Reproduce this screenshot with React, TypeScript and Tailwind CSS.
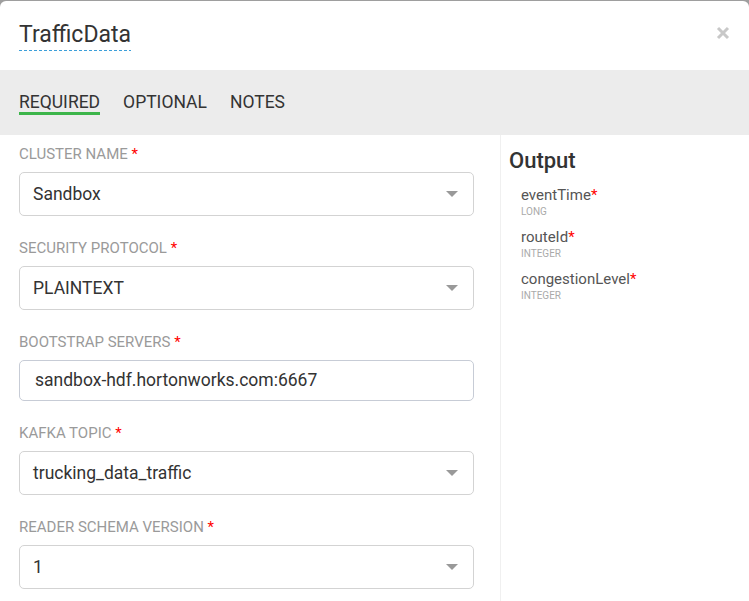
import { ReactNode } from 'react';

interface FieldProps {
  label: string;
  value: string;
  select?: boolean;
}

function Field({ label, value, select = true }: FieldProps) {
  return (
    <div className="mb-[22px]">
      <label className="block text-[15px] leading-5 text-[#9a9a9a] uppercase mb-[8px]">
        {label} <span className="text-[#ff0000]">*</span>
      </label>
      {select ? (
        <div className="flex items-center justify-between h-[44px] border border-[#d3d3d3] rounded-[5px] pl-[13px] pr-[13px] bg-white">
          <span className="text-[17.5px] text-[#333]">{value}</span>
          <svg width="14" height="8" viewBox="0 0 14 8" className="mr-[1px]">
            <path d="M1 1 L13 1 L7 7 Z" fill="#999" />
          </svg>
        </div>
      ) : (
        <div className="flex items-center h-[41px] border border-[#c7ccd6] rounded-[5px] pl-[15px] bg-white">
          <span className="text-[17.5px] text-[#333]">{value}</span>
        </div>
      )}
    </div>
  );
}

function OutputField({ name, type }: { name: string; type: string }) {
  return (
    <div className="mb-[9px]">
      <div className="text-[15px] leading-5 text-[#555]">
        {name}
        <span className="text-[#ff0000]">*</span>
      </div>
      <div className="text-[10px] leading-3 text-[#aaa] uppercase mt-[1px]">{type}</div>
    </div>
  );
}

function Tab({ children, active }: { children: ReactNode; active?: boolean }) {
  return (
    <div className="relative h-full flex items-center">
      <span className="text-[17.5px] text-[#333]">{children}</span>
      {active && <div className="absolute left-0 right-0 top-[42px] h-[3px] bg-[#3cb54a]" />}
    </div>
  );
}

export default function App() {
  return (
    <div
      className="w-[749px] h-[601px] bg-[#9e9e9e] pt-[1px] overflow-hidden"
      style={{ fontFamily: 'Roboto, "Liberation Sans", sans-serif' }}
    >
      <div className="bg-white rounded-t-[6px] h-full flex flex-col">
        {/* Header */}
        <div className="h-[69px] shrink-0 flex items-start justify-between px-[19px]">
          <div className="pt-[20px] inline-flex flex-col">
            <span className="text-[23px] leading-[28px] text-[#333]">TrafficData</span>
            <div className="h-[1px] mt-[1px] bg-[repeating-linear-gradient(90deg,#3c9fd9_0_3px,transparent_3px_5px)]" />
          </div>
          <div className="pt-[25px]">
            <svg width="14" height="14" viewBox="0 0 14 14">
              <path d="M2 2 L12 12 M12 2 L2 12" stroke="#c8c8c8" strokeWidth="3" />
            </svg>
          </div>
        </div>

        {/* Tabs */}
        <div className="h-[65px] shrink-0 bg-[#ececec] flex pl-[19px] gap-[23px]">
          <Tab active>REQUIRED</Tab>
          <Tab>OPTIONAL</Tab>
          <Tab>NOTES</Tab>
        </div>

        {/* Body */}
        <div className="flex flex-1 min-h-0">
          <div className="w-[501px] shrink-0 pl-[19px] pr-[26px] pt-[9px] border-r border-[#f0f0f0]">
            <Field label="Cluster Name" value="Sandbox" />
            <Field label="Security Protocol" value="PLAINTEXT" />
            <Field label="Bootstrap Servers" value="sandbox-hdf.hortonworks.com:6667" select={false} />
            <Field label="Kafka Topic" value="trucking_data_traffic" />
            <Field label="Reader Schema Version" value="1" />
          </div>
          <div className="flex-1 pl-[8px] pt-[12px]">
            <h2 className="text-[22px] leading-[28px] font-medium text-[#333] mb-[10px]">Output</h2>
            <div className="pl-[12px]">
              <OutputField name="eventTime" type="Long" />
              <OutputField name="routeId" type="Integer" />
              <OutputField name="congestionLevel" type="Integer" />
            </div>
          </div>
        </div>
      </div>
    </div>
  );
}
